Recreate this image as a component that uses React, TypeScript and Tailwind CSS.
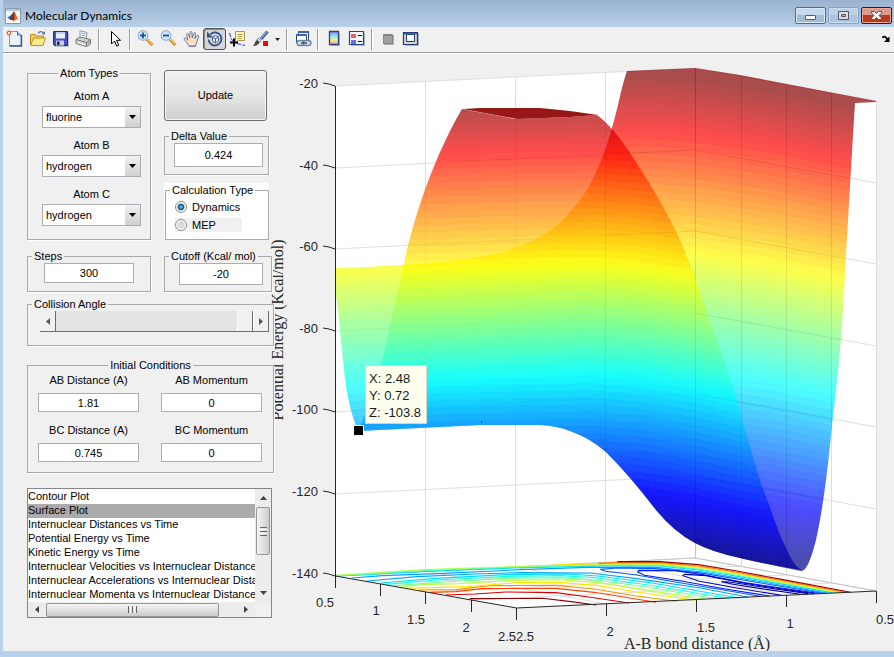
import React, { useState } from "react";
import clsx from "clsx";

const atoms = [
  { id: "atomA", label: "Atom A", value: "fluorine" },
  { id: "atomB", label: "Atom B", value: "hydrogen" },
  { id: "atomC", label: "Atom C", value: "hydrogen" },
];

const conditions = [
  { id: "abDistance", label: "AB Distance (A)", value: "1.81" },
  { id: "abMomentum", label: "AB Momentum", value: "0" },
  { id: "bcDistance", label: "BC Distance (A)", value: "0.745" },
  { id: "bcMomentum", label: "BC Momentum", value: "0" },
];

const plots = [
  "Contour Plot",
  "Surface Plot",
  "Internuclear Distances vs Time",
  "Potential Energy vs Time",
  "Kinetic Energy vs Time",
  "Internuclear Velocities vs Internuclear Distance",
  "Internuclear Accelerations vs Internuclear Distance",
  "Internuclear Momenta vs Internuclear Distance",
];

/* ---------- Toolbar icons ---------- */

const Icon = ({ children }: { children: React.ReactNode }) => (
  <svg width="18" height="18" viewBox="0 0 18 18" fill="none" aria-hidden="true">
    {children}
  </svg>
);

const NewIcon = () => (
  <Icon>
    <path d="M3.500 1.500H11.500l3.500 3.500v10.500h-11.500z" fill="#eaf3fe" stroke="#7d9ccc" />
    <path d="M11.500 1.500V5h3.500" fill="#b9d2f2" stroke="#3f62a0" />
    <path d="M15.500 5v11h-12" stroke="#35579a" strokeWidth="1.300" />
    <path d="M3 0v6.500M0 3h6.500M.8.800l4.500 4.500M5.300.800L.8 5.300" stroke="#e8a07c" strokeWidth=".8" />
    <circle cx="3" cy="3" r="1.800" fill="#fff" stroke="#d9532c" />
  </Icon>
);

const OpenIcon = () => (
  <Icon>
    <path d="M1.500 14.500V4.500h5l1 1.500h7v8.500z" fill="#f0cf62" stroke="#b98a1c" />
    <path d="M1.500 15.500l3-7.500h12l-2.500 7.500z" fill="#ffe98f" stroke="#c1901d" />
    <path d="M9 3.500c1.500-2.300 4-2.300 5.500-.5" stroke="#56759f" strokeWidth="1.200" />
    <path d="M16 1v3.500h-3.500z" fill="#56759f" />
  </Icon>
);

const SaveIcon = () => (
  <Icon>
    <path d="M3 3h14v14H3z" fill="#c0c2cc" />
    <path d="M1.500 1.500h14v14h-13l-1-1z" fill="#4a4fc4" stroke="#232a86" />
    <path d="M4 2h9v6.500H4z" fill="#eaf0fc" />
    <path d="M4 2h9v2H4z" fill="#b9cdf0" />
    <path d="M4 10.500h8v5H4z" fill="#c8cde0" />
    <path d="M5 11.500h2.500v3.500H5z" fill="#20245c" />
  </Icon>
);

const PrintIcon = () => (
  <Icon>
    <path d="M5 8V.8l7 1.700L11 9" fill="#fff" stroke="#8796b5" />
    <path d="M6.500 3l4 1M6.500 5l4 1" stroke="#7386b0" strokeWidth=".8" />
    <path d="M1 9.500l4-2.500 10.500 2.500v4.500l-4 2.500L1 13.500z" fill="#d0d0d0" stroke="#777" />
    <path d="M1 9.500l10.500 3 4-3M11.500 12.500v4" stroke="#777" />
    <path d="M2.500 12.500l7.500 2.300" stroke="#fff" />
    <circle cx="13.500" cy="12.500" r=".9" fill="#6a9a4d" />
  </Icon>
);

const PointerIcon = () => (
  <Icon>
    <path d="M5.500 1.500v12.500l3-3 2.200 5.200 2-.9-2.200-5h4z" fill="#fff" stroke="#000" />
  </Icon>
);

const Magnifier = ({ plus }: { plus?: boolean }) => (
  <Icon>
    <path d="M10 9.500l5.500 5.500" stroke="#b8741c" strokeWidth="3" />
    <path d="M10.300 9.300l5.200 5.200" stroke="#fbca60" strokeWidth="1.600" />
    <circle cx="6" cy="5.500" r="4.800" fill="#c9e8fb" stroke="#9ab4d6" strokeWidth="1.200" />
    <path d="M3 5.500h6" stroke="#174a93" strokeWidth="1.700" />
    {plus && <path d="M6 2.500v6" stroke="#174a93" strokeWidth="1.700" />}
  </Icon>
);

const HandIcon = () => (
  <Icon>
    <path
      d="M6 16.500C5 13.500 2.500 11.500 1.200 9.200c-.5-1.400 1-1.800 1.900-.9L5 10.200 3.500 4.600c-.2-1.400 1.500-1.700 1.900-.4L6.800 8 6.900 2.500c.1-1.400 1.900-1.400 2 0L9.300 8l1.500-4.800c.5-1.200 2-.8 1.800.5L11.800 8.700l2.200-2.900c.9-1 2.200-.1 1.600 1.100-1.500 2.800-1.700 6-3.200 9.600z"
      fill="#fde0bf"
      stroke="#5f6f9f"
      strokeWidth=".9"
    />
    <path d="M6.500 15.500h5.500" stroke="#e3a56d" />
  </Icon>
);

const RotateIcon = () => (
  <Icon>
    <path d="M4.500 4.200a6.500 6.500 0 1 1-2 5.300" stroke="#3d5382" strokeWidth="1.900" />
    <path d="M1 1.500v6h6z" fill="#3d5382" />
    <path d="M6.500 7.200l3-1.700 3 1.700v4l-3 1.700-3-1.700zM6.500 7.200l3 1.600 3-1.600M9.500 8.800v4" fill="#e9f1fb" stroke="#4a618f" />
  </Icon>
);

const DataCursorIcon = () => (
  <Icon>
    <path d="M.5 3c1 4 2 7 4 9M8 13.500l8 2" stroke="#2d36e8" strokeDasharray="4 1.500" />
    <path d="M6.500 1.500h9v9h-6l-3 2z" fill="#fbf5b2" stroke="#a3965a" />
    <path d="M8.500 4.500h5M8.500 6.500h5M8.500 8.500h4" stroke="#ada05c" />
    <path d="M5 8.500v8M1 12.500h8" stroke="#000" strokeWidth="2" />
  </Icon>
);

const BrushIcon = () => (
  <Icon>
    <path d="M15.500 1.500L9 9" stroke="#2e4a86" strokeWidth="3" />
    <path d="M15 1.500L9 8.500" stroke="#90abd6" strokeWidth="1.200" />
    <path d="M6 8l3 2.500-1.500 2L5 10z" fill="#dce2ec" stroke="#5d6d8c" strokeWidth=".7" />
    <path d="M1 16c2-1.500 1.500-4.500 4-6l2.500 2c-.5 2.500-3.500 4-6.500 4z" fill="#444" />
    <path d="M11 11h5v5h-5z" fill="#f00" />
  </Icon>
);

const LinkIcon = () => (
  <Icon>
    <path d="M4.500 1.500h10v9h-10z" fill="#fff" stroke="#23407f" />
    <path d="M4 1h11v2H4z" fill="#3d63b3" />
    <path d="M2.500 4.500h10v8h-10z" fill="#fff" stroke="#23407f" />
    <path d="M2 4h11v2H2z" fill="#3d63b3" />
    <rect x="3" y="10.500" width="8" height="5" rx="2.500" fill="#cfdde9" stroke="#6d8399" strokeWidth="1.300" />
    <rect x="9" y="10.500" width="8" height="5" rx="2.500" fill="#cfdde9" stroke="#6d8399" strokeWidth="1.300" />
    <path d="M7 13h6" stroke="#2c405c" strokeWidth="1.300" />
  </Icon>
);

const ColorbarIcon = () => (
  <Icon>
    <defs>
      <linearGradient id="cbar" x1="0" y1="0" x2="0" y2="1">
        <stop offset="0" stopColor="#8b86ee" />
        <stop offset=".35" stopColor="#8fe6f4" />
        <stop offset=".65" stopColor="#f4eea0" />
        <stop offset="1" stopColor="#f29a8e" />
      </linearGradient>
    </defs>
    <path d="M6 3h9v13H6z" fill="#b4b8bd" />
    <path d="M4.500 1.500h9v13h-9z" fill="url(#cbar)" stroke="#274580" strokeWidth="1.300" />
  </Icon>
);

const LegendIcon = () => (
  <Icon>
    <path d="M3 3h14v13H3z" fill="#b4b8bd" />
    <path d="M1.500 1.500h14v13h-14z" fill="#f3f8ff" stroke="#274580" strokeWidth="1.200" />
    <path d="M3 4h5v4H3z" fill="#e46163" />
    <path d="M3 10h5v4H3z" fill="#6c6ce8" />
    <path d="M10 5.500h4M10 11.500h4" stroke="#000" />
  </Icon>
);

const HideIcon = () => (
  <Icon>
    <path d="M5 5h10v10H5z" fill="#adadad" />
    <path d="M4.500 4.500h9v9h-9z" fill="#a0a0a0" stroke="#858585" />
    <path d="M4 5.500h10" stroke="#858585" />
  </Icon>
);

const ShowIcon = () => (
  <Icon>
    <path d="M3 4h14v12H3z" fill="#b4b8bd" />
    <path d="M1.500 2.500h14v12h-14z" fill="#d2d7d2" stroke="#1f3a78" strokeWidth="1.200" />
    <path d="M2 3h13v1.500H2z" fill="#3d6ac0" />
    <path d="M4.500 4.500h8v7h-8z" fill="#fff" stroke="#1f3a78" />
  </Icon>
);

const toolGroups = [
  [
    { name: "New Figure", icon: NewIcon },
    { name: "Open File", icon: OpenIcon },
    { name: "Save Figure", icon: SaveIcon },
    { name: "Print Figure", icon: PrintIcon },
  ],
  [{ name: "Edit Plot", icon: PointerIcon }],
  [
    { name: "Zoom In", icon: () => <Magnifier plus /> },
    { name: "Zoom Out", icon: () => <Magnifier /> },
    { name: "Pan", icon: HandIcon },
    { name: "Rotate 3D", icon: RotateIcon, active: true },
    { name: "Data Cursor", icon: DataCursorIcon },
    { name: "Brush", icon: BrushIcon, menu: true },
  ],
  [{ name: "Link Plot", icon: LinkIcon }],
  [
    { name: "Insert Colorbar", icon: ColorbarIcon },
    { name: "Insert Legend", icon: LegendIcon },
  ],
  [
    { name: "Hide Plot Tools", icon: HideIcon },
    { name: "Show Plot Tools", icon: ShowIcon },
  ],
] as { name: string; icon: React.FC; active?: boolean; menu?: boolean }[][];

const Toolbar = () => (
  <div className="flex h-[27px] items-start border-b border-white bg-[#f0f0f0] shadow-[inset_0_-1px_0_#9c9c9c]">
    {toolGroups.map((group, i) => (
      <div key={i} className="flex h-6 items-center">
        {i > 0 && <span className="mx-[3px] h-[21px] w-[2px] border-r border-white bg-[#9a9a9a]" />}
        {group.map(({ name, icon: Glyph, active, menu }) => (
          <React.Fragment key={name}>
            <button
              type="button"
              aria-label={name}
              className={clsx(
                "flex h-[22px] w-[23px] items-center justify-center",
                active && "rounded-[3px] border border-[#555] bg-[#d4d8dd] shadow-[inset_1px_1px_1px_#888]"
              )}
            >
              <Glyph />
            </button>
            {menu && (
              <button type="button" aria-label="Brush options" className="flex h-[22px] w-[11px] items-center justify-center">
                <svg width="5" height="3" viewBox="0 0 5 3" aria-hidden="true">
                  <path d="M0 0h5L2.500 3z" fill="#222" />
                </svg>
              </button>
            )}
          </React.Fragment>
        ))}
      </div>
    ))}
    <button type="button" aria-label="Dock Figure" className="mr-1 ml-auto flex h-6 items-center">
      <svg width="8" height="8" viewBox="0 0 8 8" aria-hidden="true">
        <path d="M.8 3c.5-2.500 3-1.500 4.500 1.500" fill="none" stroke="#000" strokeWidth="1.800" />
        <path d="M7.500 1.500V7H2z" fill="#000" />
      </svg>
    </button>
  </div>
);

const TitleBar = () => (
  <header className="flex h-[27px] items-center bg-linear-to-b from-[#99b2cf] to-[#b8d0e9] pr-[2px] pl-[2px]">
    <svg width="16" height="16" viewBox="0 0 16 16" className="mt-1" aria-hidden="true">
      <path d="M.5.500h15v15H.5z" fill="#f6f6f6" stroke="#8b98a8" />
      <path d="M1 1h14v2H1z" fill="#b9c8d8" />
      <path d="M2 9.500l3.500-2L8 9l-2.500 3z" fill="#3b86b8" />
      <path d="M5.500 7.500C7.500 6.500 8 3.500 9.200 3.500L7.500 10l-2 2-1-1.500z" fill="#2b4f7c" />
      <path d="M9.200 3.500c1.500 1 2.300 6 4.800 8.500-2-1.300-3.300-.5-5 1.500-.8-1.500-1.500-1.800-3.500-1.500C8 10.500 8 4.500 9.200 3.500z" fill="#e0662a" />
      <path d="M9.200 3.500c.3 3 .3 6-.7 9.500-.7-1-1.500-1.200-3-1C8 10.500 8 4.500 9.200 3.500z" fill="#8d2410" />
    </svg>
    <h1 className="ml-1 pt-1 font-['Lato',sans-serif] text-xs text-black">Molecular Dynamics</h1>
    <div className="mt-1 ml-auto flex gap-[2px]">
      <button type="button" aria-label="Minimize" className="flex h-[17px] w-[31px] items-center justify-center rounded-xs border border-[#54698a] bg-linear-to-b from-[#c5d9ee] from-50% to-[#a3bdd9] to-50% shadow-[inset_0_0_0_1px_#dbe8f5]">
        <svg width="11" height="5" viewBox="0 0 11 5" className="mt-1" aria-hidden="true">
          <rect x=".5" y=".5" width="10" height="4" rx=".5" fill="#fff" stroke="#555a6b" />
        </svg>
      </button>
      <button type="button" aria-label="Maximize" className="flex h-[17px] w-[31px] items-center justify-center rounded-xs border border-[#8aa3c2] bg-linear-to-b from-[#bdd2e9] from-50% to-[#abc5e0] to-50% shadow-[inset_0_0_0_1px_#cbdcee]">
        <svg width="11" height="9" viewBox="0 0 11 9" aria-hidden="true">
          <path d="M.5.500h10v8H.5z" fill="#ddd" stroke="#555a6b" />
          <path d="M3.500 3.500h4v2h-4z" fill="#9db4cf" stroke="#555a6b" />
        </svg>
      </button>
      <button type="button" aria-label="Close" className="flex h-[17px] w-[31px] items-center justify-center rounded-xs border border-[#431422] bg-linear-to-b from-[#e0988a] from-50% to-[#b93a1f] to-50% shadow-[inset_0_0_0_1px_#e6a99c]">
        <svg width="11" height="9" viewBox="0 0 11 9" aria-hidden="true">
          <path d="M.5.500h3l2 2 2-2h3v1.500L8 4.500l2.500 2.500v1.500h-3l-2-2-2 2h-3V7L3 4.500.5 2z" fill="#fff" stroke="#535666" />
        </svg>
      </button>
    </div>
  </header>
);

/* ---------- Controls ---------- */

const Panel = ({ title, centered, className, children }: {
  title: string;
  centered?: boolean;
  className?: string;
  children: React.ReactNode;
}) => (
  <fieldset className={clsx("min-w-0 border border-[#a9a9a9] bg-[#f0f0f0] shadow-[1px_1px_0_#fff]", className)}>
    <legend className={clsx("px-[2px] leading-[14px] whitespace-nowrap", centered ? "mx-auto" : "ml-1")}>{title}</legend>
    {children}
  </fieldset>
);

const inputClass = "block w-full border border-[#abadb3] bg-white text-center text-black outline-none";

const Controls = () => {
  const [mode, setMode] = useState("Dynamics");
  const [angle, setAngle] = useState(180);

  return (
    <aside className="relative z-10 w-[271px] shrink-0 pt-3 pl-6">
      <div className="flex gap-[13px]">
        {/* Atom types */}
        <Panel title="Atom Types" centered className="h-[174px] w-[124px]">
          <div className="flex flex-col gap-[10px] pt-[9px] pr-[9px] pl-[14px]">
            {atoms.map((atom) => (
              <div key={atom.id} className="flex flex-col gap-[3px]">
                <label htmlFor={atom.id} className="text-center leading-[14px]">{atom.label}</label>
                <div className="relative">
                  <select
                    id={atom.id}
                    defaultValue={atom.value}
                    className="block h-[22px] w-full appearance-none border border-[#abadb3] bg-white pl-[3px] text-black outline-none"
                  >
                    <option>fluorine</option>
                    <option>hydrogen</option>
                  </select>
                  <span className="pointer-events-none absolute inset-y-px right-px flex w-[15px] items-center justify-center bg-linear-to-b from-[#f2f2f2] to-[#cfcfcf]">
                    <svg width="7" height="4" viewBox="0 0 7 4" aria-hidden="true">
                      <path d="M0 0h7L3.500 4z" fill="#000" />
                    </svg>
                  </span>
                </div>
              </div>
            ))}
          </div>
        </Panel>

        <div className="flex w-[105px] flex-col gap-2 pt-1">
          <button
            type="button"
            className="mr-[2px] h-[51px] rounded-[3px] border border-[#707070] bg-linear-to-b from-[#f0f0f0] via-[#e6e6e6] via-50% to-[#cfcfcf] shadow-[inset_0_0_0_1px_#f6f6f6]"
          >
            Update
          </button>
          <Panel title="Delta Value" className="h-[46px]">
            <div className="pr-[5px] pl-[9px]">
              <input aria-label="Delta Value" defaultValue="0.424" className={clsx(inputClass, "h-6")} />
            </div>
          </Panel>

          {/* Calculation type */}
          <div className="bg-white pl-px">
            <fieldset className="h-[57px] min-w-0 border border-[#a9a9a9]">
              <legend className="ml-1 bg-white px-[2px] leading-[14px] whitespace-nowrap">Calculation Type</legend>
              <div className="flex flex-col gap-1 pt-[3px] pl-[9px]">
                {["Dynamics", "MEP"].map((m) => (
                  <label key={m} className={clsx("flex h-[14px] w-[67px] items-center gap-[5px] whitespace-nowrap", m === "MEP" && "bg-[#f0f0f0]")}>
                    <input
                      type="radio"
                      name="calc"
                      checked={mode === m}
                      onChange={() => setMode(m)}
                      className="size-3 shrink-0 appearance-none rounded-full border border-[#8e8f8f] bg-[radial-gradient(circle,#d8d8d8_40%,#f6f6f6_60%)] checked:bg-[radial-gradient(circle,#5fc2e6_5%,#12517c_40%,#f4f4f4_55%)]"
                    />
                    {m}
                  </label>
                ))}
              </div>
            </fieldset>
          </div>
        </div>
      </div>

      <div className="mt-[9px] flex gap-[13px]">
        <Panel title="Steps" className="h-[43px] w-[124px]">
          <div className="px-4">
            <input aria-label="Steps" defaultValue="300" className={clsx(inputClass, "h-5")} />
          </div>
        </Panel>
        <Panel title="Cutoff (Kcal/ mol)" className="h-[43px] w-[108px]">
          <div className="pr-[8px] pl-[14px]">
            <input aria-label="Cutoff (Kcal/ mol)" defaultValue="-20" className={clsx(inputClass, "h-[22px]")} />
          </div>
        </Panel>
      </div>

      {/* Collision angle */}
      <Panel title="Collision Angle" className="mt-[5px] h-[49px]">
        <div className="mr-1 ml-3 flex h-[21px] border-b border-[#6d6d6d] bg-[#e4e4e4]">
          <button type="button" aria-label="Decrease angle" className="flex w-4 items-center justify-center border-r border-[#6d6d6d] bg-[#f0f0f0]">
            <svg width="4" height="7" viewBox="0 0 4 7" aria-hidden="true"><path d="M4 0v7L0 3.500z" fill="#555" /></svg>
          </button>
          <input
            type="range"
            aria-label="Collision Angle"
            min="0"
            max="180"
            value={angle}
            onChange={(e) => setAngle(Number(e.target.value))}
            className="h-full min-w-0 flex-1 appearance-none bg-[#e4e4e4] outline-none [&::-webkit-slider-thumb]:h-5 [&::-webkit-slider-thumb]:w-4 [&::-webkit-slider-thumb]:appearance-none [&::-webkit-slider-thumb]:border-r [&::-webkit-slider-thumb]:border-l [&::-webkit-slider-thumb]:border-r-[#6d6d6d] [&::-webkit-slider-thumb]:border-l-white [&::-webkit-slider-thumb]:bg-[#f0f0f0]"
          />
          <button type="button" aria-label="Increase angle" className="flex w-4 items-center justify-center border-r border-l border-r-[#6d6d6d] border-l-white bg-[#f0f0f0]">
            <svg width="4" height="7" viewBox="0 0 4 7" aria-hidden="true"><path d="M0 0v7l4-3.500z" fill="#555" /></svg>
          </button>
        </div>
      </Panel>

      {/* Initial conditions */}
      <Panel title="Initial Conditions" centered className="mt-3 h-[115px]">
        <div className="grid grid-cols-2 gap-x-[22px] gap-y-[11px] pt-px pr-[11px] pl-[10px]">
          {conditions.map((c) => (
            <div key={c.id} className="flex flex-col gap-[6px]">
              <label htmlFor={c.id} className="text-center leading-[14px]">{c.label}</label>
              <input id={c.id} defaultValue={c.value} className={clsx(inputClass, "h-[19px]")} />
            </div>
          ))}
        </div>
      </Panel>

      {/* Plot list */}
      <div className="mt-[15px] mr-[2px] grid h-[130px] grid-cols-[1fr_16px] grid-rows-[1fr_15px] border border-[#828790] bg-white">
        <select size={8} defaultValue="Surface Plot" aria-label="Plot" className="h-[113px] w-full min-w-0 overflow-hidden bg-white pt-px text-black outline-none">
          {plots.map((p) => (
            <option key={p} className="h-[14px] min-h-0 overflow-hidden p-0 leading-[14px] text-black checked:bg-[linear-gradient(#ababab,#ababab)]">{p}</option>
          ))}
        </select>
        <div className="flex flex-col items-center bg-[#ececec]">
          <button type="button" aria-label="Scroll up" className="flex h-[18px] w-full items-center justify-center">
            <svg width="7" height="4" viewBox="0 0 7 4" aria-hidden="true"><path d="M0 4h7L3.500 0z" fill="#444" /></svg>
          </button>
          <div className="flex h-[48px] w-[14px] flex-col items-center justify-center gap-px rounded-xs border border-[#979797] bg-linear-to-r from-[#f5f5f5] to-[#cbcbcb]">
            <span className="h-px w-[7px] bg-[#666]" />
            <span className="h-px w-[7px] bg-white" />
            <span className="h-px w-[7px] bg-[#666]" />
            <span className="h-px w-[7px] bg-white" />
            <span className="h-px w-[7px] bg-[#666]" />
          </div>
          <button type="button" aria-label="Scroll down" className="mt-auto flex h-[18px] w-full items-center justify-center">
            <svg width="7" height="4" viewBox="0 0 7 4" aria-hidden="true"><path d="M0 0h7L3.500 4z" fill="#444" /></svg>
          </button>
        </div>
        <div className="flex items-center bg-[#ececec]">
          <button type="button" aria-label="Scroll left" className="flex h-full w-[18px] items-center justify-center">
            <svg width="4" height="7" viewBox="0 0 4 7" aria-hidden="true"><path d="M4 0v7L0 3.500z" fill="#444" /></svg>
          </button>
          <div className="flex h-[14px] w-[173px] items-center justify-center gap-px rounded-xs border border-[#979797] bg-linear-to-b from-[#f5f5f5] to-[#cbcbcb]">
            <span className="h-[7px] w-px bg-[#666]" />
            <span className="h-[7px] w-px bg-white" />
            <span className="h-[7px] w-px bg-[#666]" />
            <span className="h-[7px] w-px bg-white" />
            <span className="h-[7px] w-px bg-[#666]" />
          </div>
          <button type="button" aria-label="Scroll right" className="ml-auto flex h-full w-[18px] items-center justify-center">
            <svg width="4" height="7" viewBox="0 0 4 7" aria-hidden="true"><path d="M0 0v7l4-3.500z" fill="#444" /></svg>
          </button>
        </div>
        <div className="bg-[#f0f0f0]" />
      </div>
    </aside>
  );
};

/* ---------- Surface plot ---------- */

const LEVELS = 64;

// classic jet colormap, t runs 0..1
const jet = (t: number) => {
  const channel = (center: number) =>
    Math.round(255 * Math.max(0, Math.min(1, 1.5 - Math.abs(4 * t - center))));
  return `rgb(${channel(3)},${channel(2)},${channel(1)})`;
};

// height of the topmost level along x, for the two sheets of the surface
const frontTop = [[335, 102], [400, 99], [450, 98], [520, 96], [590, 95], [640, 99], [695, 108], [740, 118], [860, 142]];
const backTop = [[335, 90], [420, 88], [500, 84], [590, 75], [640, 72], [690, 75], [770, 86], [860, 104], [880, 108]];

const frontOutline =
  "M462 109L515 119L570 117L597 115Q612 126 630 153Q664 204 680 240Q697 280 709 318Q724 358 737 400Q744 428 752 453Q760 483 770 507Q778 532 787 550Q794 566 801 570Q760 563 740 558Q712 552 695 543Q674 532 656 510Q630 476 606 452Q590 438 570 431Q558 426 540 425L480 425L358 431Q372 400 381 366Q393 312 404 264C414 215 435 155 462 109Z";
const backOutline =
  "M335 268Q400 266 440 262Q492 257 515 248Q548 238 571 211C597 184 610 138 618 105Q623 82 627 71L695 68L740 75L876 101L876 102L855 103Q849 200 843 310Q839 370 832 425Q825 500 816 540Q808 572 801 571Q760 563 740 558Q712 552 695 543Q674 532 656 510Q630 476 606 452Q590 438 570 431Q558 426 540 425L480 425L358 431Q348 408 344 370Q341 340 338 310L335 290Z";

const bands = (top: number[][], height: number) =>
  Array.from({ length: LEVELS }, (_, i) => {
    const dy = i === 0 ? -40 : (i / LEVELS) * height;
    const line = top.map(([x, y]) => `${x} ${(y + dy).toFixed(1)}`).join("L");
    return <path key={i} d={`M${line}L880 620L335 620Z`} fill={jet(1 - (i + 0.5) / LEVELS)} />;
  });

const zTicks = [-20, -40, -60, -80, -100, -120, -140].map((value, i) => ({
  value,
  left: Math.round(86 + i * 81.6),
  mid: Math.round(68 + i * 81.6),
  right: Math.round(101 + i * 81.6),
}));

const wallLines = [
  [425, 81, 571], [515, 77, 567], [605, 72, 562], [695, 68, 558],
  [741, 76, 566], [786, 85, 575], [831, 93, 583], [876, 101, 591],
];

const floorTicks = [
  [335, 576], [380, 584], [425, 592], [471, 600], [516, 608],
  [606, 604], [696, 600], [786, 595], [876, 591],
];

const floorLabels = [
  { x: 325, y: 607, text: "0.5" },
  { x: 376, y: 615, text: "1" },
  { x: 416, y: 624, text: "1.5" },
  { x: 466, y: 632, text: "2" },
  { x: 516, y: 641, text: "2.52.5" },
  { x: 610, y: 636, text: "2" },
  { x: 706, y: 632, text: "1.5" },
  { x: 790, y: 628, text: "1" },
  { x: 885, y: 624, text: "0.5" },
];

// contour curves projected on the floor of the axes
const contours = [
  { color: "#8f0000", d: "M467 176L655 175L730 185L795 195" },
  { color: "#d40000", d: "M405 165L480 162L560 156L690 158L780 172L880 189" },
  { color: "#ff4000", d: "M365 157L430 155L500 146L690 145L790 157L950 187" },
  { color: "#ff9000", d: "M335 150L430 149L520 137L690 136L790 147L900 168L1003 184" },
  { color: "#ffe600", d: "M310 145L460 140L590 128L700 127L800 137L900 156L1050 181" },
  { color: "#b8ff46", d: "M285 142L340 134L440 131L570 121L700 119L800 128L920 149L1080 179" },
  { color: "#70ff8e", d: "M270 137L400 126L560 115L700 113L800 121L930 142L1112 178" },
  { color: "#20ffdc", d: "M250 133L380 120L550 110L700 107L790 113L930 135L1140 176" },
  { color: "#00dcff", d: "M236 129L380 115L560 104L720 102L800 108L940 129L1165 174" },
  { color: "#00a4ff", d: "M200 123L330 110L480 102L600 98L780 99L900 116L1070 145L1190 172" },
  { color: "#00a4ff", d: "M160 114L240 107L400 100L600 89L770 82L950 82L1070 96L1180 117L1395 159" },
  { color: "#0060ff", d: "M1220 169L1110 147L1000 126L900 105L820 94L805 88L850 84L950 86L1060 98L1180 121L1385 160" },
  { color: "#0018ff", d: "M1245 168L1130 147L1020 124L920 106L903 96L905 91L1000 92L1070 104L1180 128L1370 160" },
  { color: "#0000c0", d: "M1275 166L1160 144L1060 123L1020 107L1025 103L1080 107L1180 130L1360 161" },
  { color: "#0000a0", d: "M1325 163L1240 149L1150 133L1120 125L1140 126L1230 142L1345 161" },
  { color: "#00d4ff", d: "M130 108L350 94L600 83L850 77L960 78L1060 90L1160 109L1408 158" },
  { color: "#38ffc0", d: "M125 107L350 92L600 81L850 75L960 76L1060 87L1160 106L1418 158" },
  { color: "#b0ff50", d: "M118 106L350 89L600 79L850 72L960 73L1060 84L1160 103L1426 158" },
  { color: "#ffe000", d: "M680 76L730 73L850 70L960 71L1060 81L1160 100L1434 158" },
  { color: "#ff7800", d: "M800 70L850 68L960 68L1060 78L1160 97L1442 157" },
  { color: "#9c0000", d: "M850 65L960 65L1060 74L1160 93L1280 119L1455 157" },
];

const SurfacePlot = () => (
  <svg
    viewBox="274 54 620 597"
    className="block h-auto w-full overflow-visible font-['Liberation_Sans',Arial,sans-serif] text-[13px]"
    role="img"
    aria-label="Potential energy surface"
  >
    <defs>
      <clipPath id="front"><path d={frontOutline} /></clipPath>
      <clipPath id="back"><path d={backOutline} /></clipPath>
    </defs>

    {/* Axes box and grid */}
    <path d="M335 86L695 68L876 101V591L516 608L335 576Z" fill="#fff" />
    <g stroke="#dedede" fill="none">
      {wallLines.map(([x, y1, y2]) => (
        <path key={x} d={`M${x + 0.5} ${y1}V${y2}`} />
      ))}
      {zTicks.map((t) => (
        <path key={t.value} d={`M335 ${t.left}L695 ${t.mid}L876 ${t.right}`} />
      ))}
      <path d="M425 571L606 604M515 567L696 600M605 562L786 595M380 584L741 566M425 592L786 575M471 600L831 583" />
    </g>
    <path d="M695.500 68V558M335 576L695 558L876 591" stroke="#c4c4c4" fill="none" />

    {/* Contours */}
    <g transform="translate(290 540) scale(.3852 .3333)" fill="none" strokeWidth="1.100">
      {contours.map((c) => (
        <path key={c.d} d={c.d} stroke={c.color} vectorEffect="non-scaling-stroke" />
      ))}
    </g>

    {/* Translucent sheets */}
    <g clipPath="url(#back)" opacity=".7" shapeRendering="crispEdges">{bands(backTop, 475)}</g>
    <g clipPath="url(#front)" opacity=".7" shapeRendering="crispEdges">{bands(frontTop, 450)}</g>
    <path d="M463 109L480 108H540L570 111L598 115L570 117L517 119Z" fill="#971616" />
    <g stroke="#000" strokeOpacity=".05" fill="none" clipPath="url(#back)">
      <path d="M605.500 72V562M695.500 68V558M741.500 76V566M786.500 85V575M831.500 93V583" />
      <path d="M605 154L695 150L876 183M605 235L695 231L876 264M695 313L876 346M695 394L876 427M695 476L876 509" />
    </g>
    <path d="M481.500 421v2" stroke="#124a86" />

    {/* Axis lines and ticks */}
    <g stroke="#262626" fill="none">
      <path d="M335.500 86V576L516.500 608L876 591" />
      {zTicks.map((t) => (
        <path key={t.value} d={`M323 ${t.left - 3}L329 ${t.left - 2}L335 ${t.left}`} />
      ))}
      {floorTicks.map(([x, y]) => (
        <path key={x} d={`M${x + 0.5} ${y}v12`} />
      ))}
    </g>
    <g fill="#262626">
      {zTicks.map((t) => (
        <text key={t.value} x="318" y={t.left + 2} textAnchor="end">{t.value}</text>
      ))}
      {floorLabels.map((l) => (
        <text key={l.x} x={l.x} y={l.y} textAnchor="middle">{l.text}</text>
      ))}
    </g>
    <g fill="#262626" className="font-['Liberation_Serif','Times_New_Roman',serif] text-base">
      <text x="697" y="649" textAnchor="middle">A-B bond distance (Å)</text>
      <text transform="translate(283 330) rotate(-90)" textAnchor="middle">Potential Energy (Kcal/mol)</text>
    </g>

    {/* Data tip */}
    <path d="M365.500 365.500h61v58h-61z" fill="#ffffee" stroke="#d4d4c8" />
    <g fill="#1a1a1a">
      <text x="369" y="383">X: 2.48</text>
      <text x="369" y="400">Y: 0.72</text>
      <text x="369" y="417">Z: -103.8</text>
    </g>
    <path d="M353.500 425.500h10v10h-10z" fill="#000" stroke="#ffffdc" />
  </svg>
);

export default function App() {
  return (
    <div className="flex min-h-screen flex-col border-b-6 border-l-3 border-[#b9d1ea] bg-[#f0f0f0] font-['Liberation_Sans',Arial,sans-serif] text-[11px] text-black">
      <TitleBar />
      <Toolbar />
      <main className="flex flex-1 overflow-hidden">
        <Controls />
        <div className="min-w-0 flex-1">
          <SurfacePlot />
        </div>
      </main>
    </div>
  );
}
